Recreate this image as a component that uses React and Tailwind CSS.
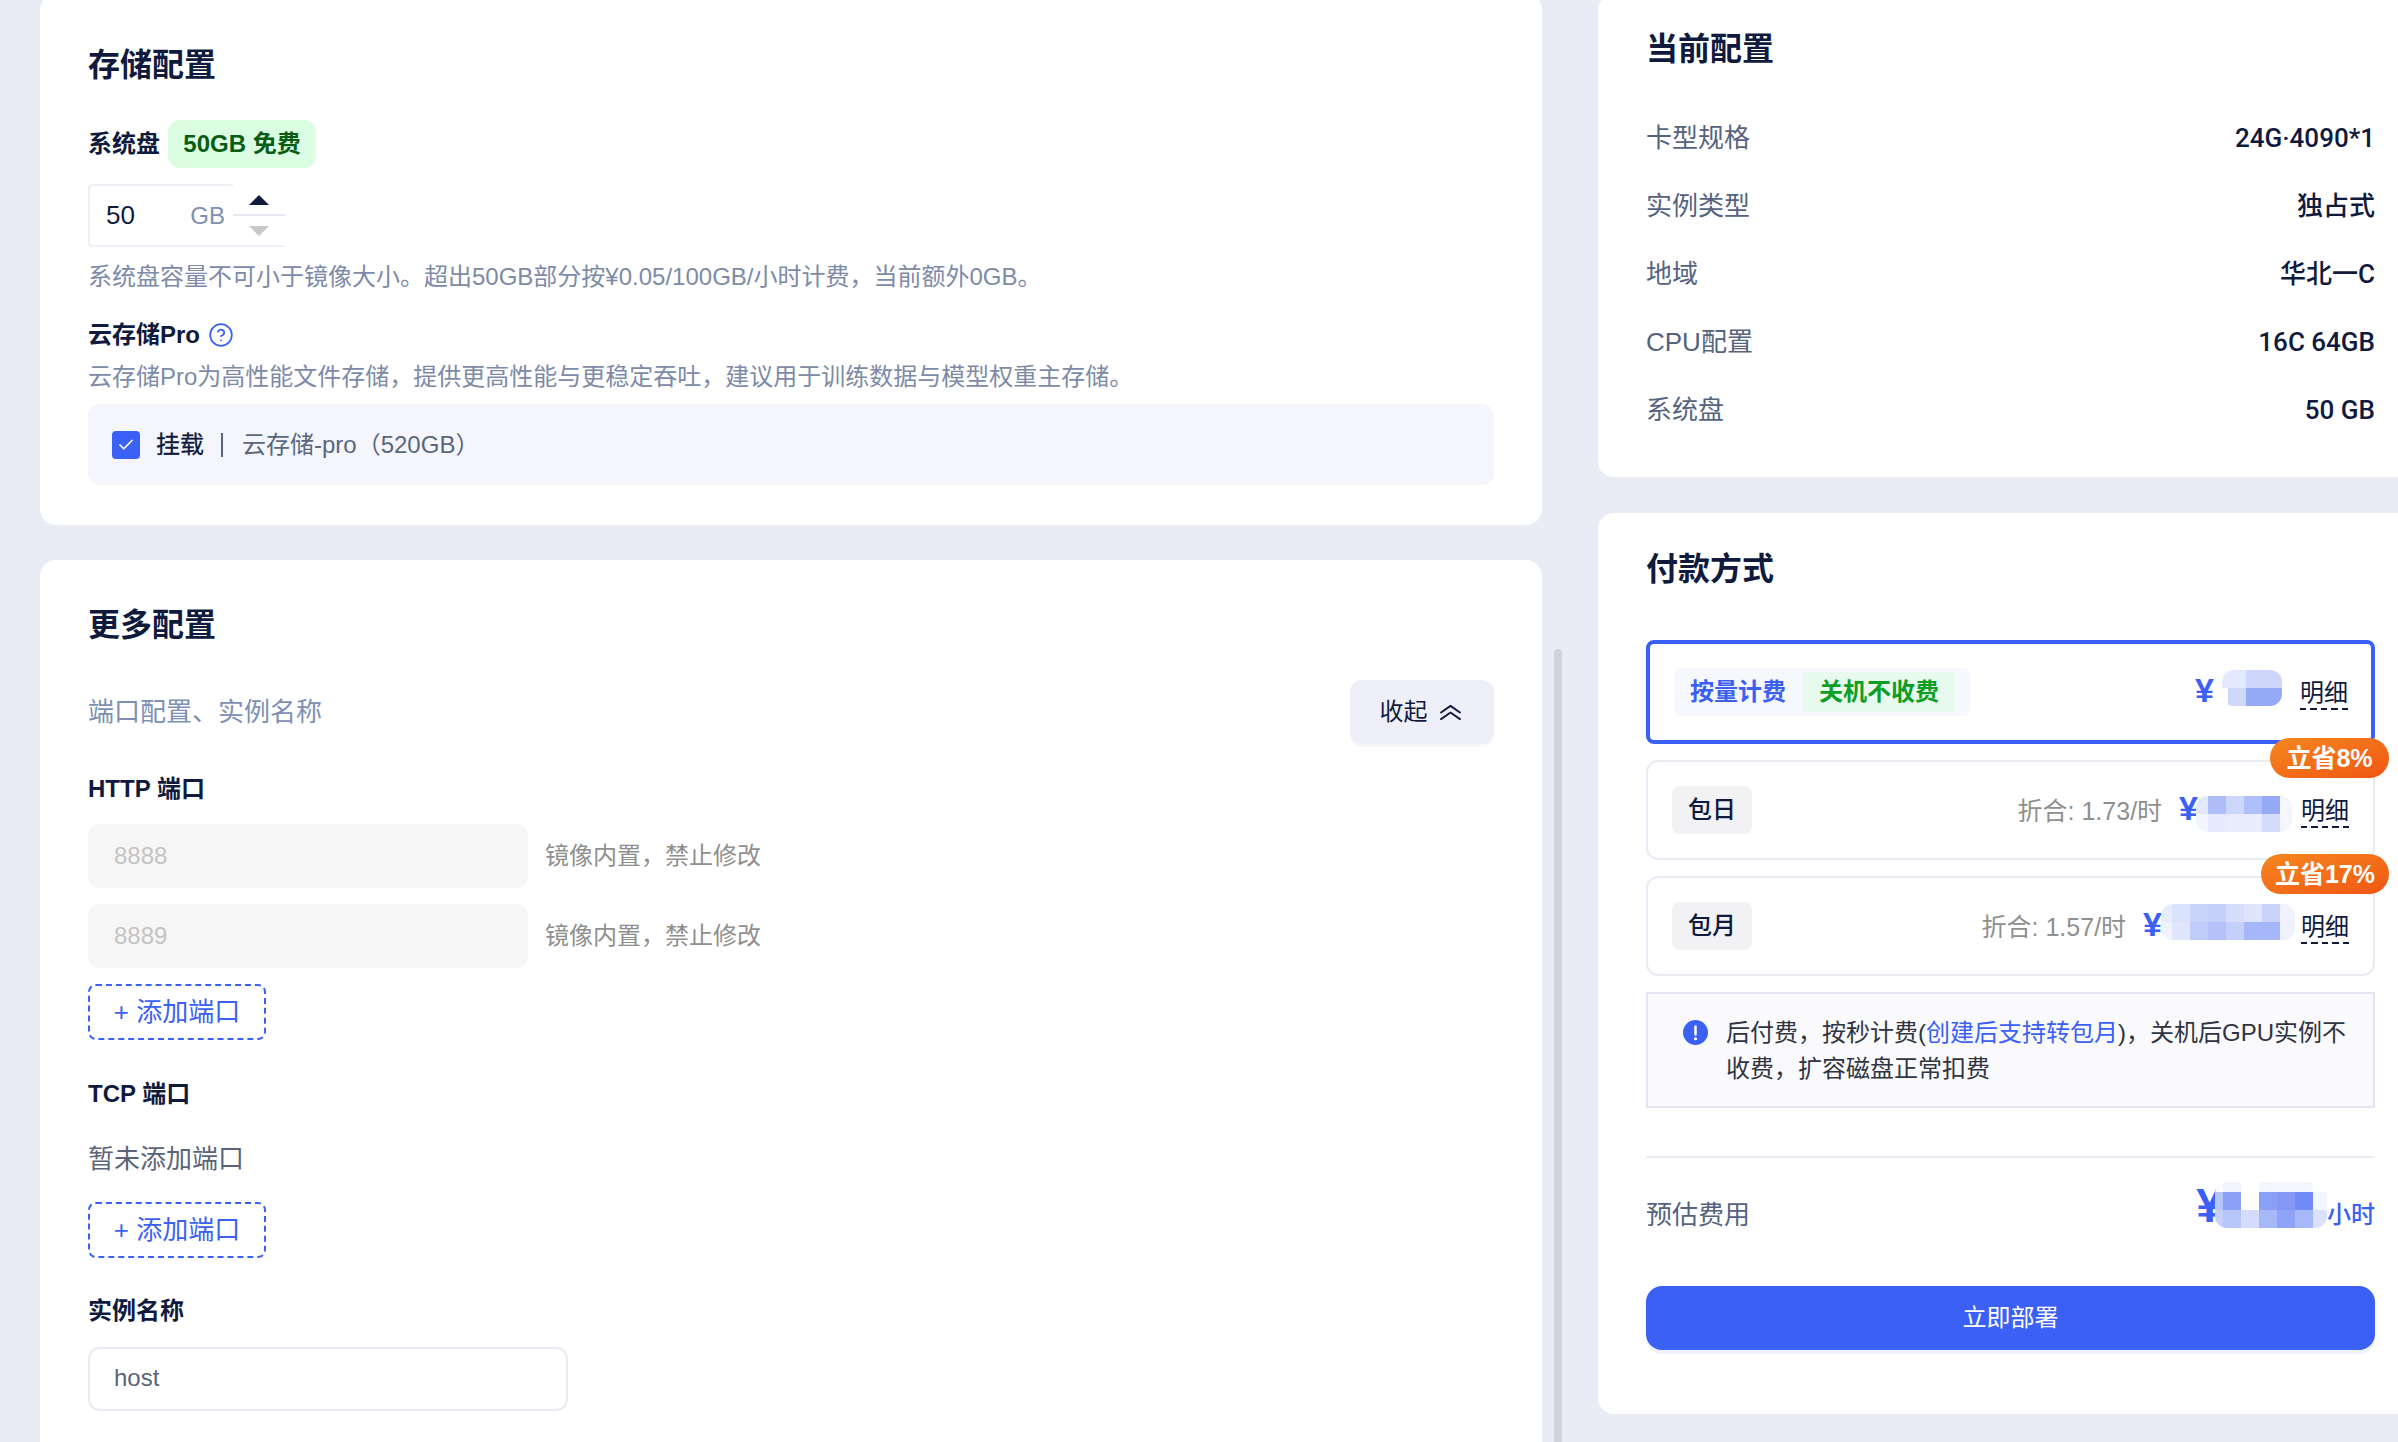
import { CircleHelp, Check } from 'lucide-react'

const configRows = [
  ['卡型规格', '24G·4090*1'],
  ['实例类型', '独占式'],
  ['地域', '华北一C'],
  ['CPU配置', '16C 64GB'],
  ['系统盘', '50 GB'],
]

// blurred prices: each row is a strip of pixel cells
const mosaicHour = {
  box: 'w-[60px] h-[36px]',
  rows: [
    ['h-[18px]', [['w-[24px]', 'bg-[#e3e9fc]'], ['w-[36px]', 'bg-[#cdd6fa]']]],
    ['h-[18px]', [['w-[6px]', 'bg-white'], ['w-[18px]', 'bg-[#cfd8fb]'], ['w-[36px]', 'bg-[#95aaf6]']]],
  ],
}
const mosaicDay = {
  box: 'w-[96px] h-[36px]',
  rows: [
    ['h-[18px]', [['w-[12px]', 'bg-[#e3e9fc]'], ['w-[18px]', 'bg-[#adbdf8]'], ['w-[18px]', 'bg-[#cdd6fb]'], ['w-[18px]', 'bg-[#aebff9]'], ['w-[18px]', 'bg-[#95a9f6]'], ['w-[12px]', 'bg-[#f4f6fe]']]],
    ['h-[18px]', [['w-[12px]', 'bg-[#f2f4fe]'], ['w-[18px]', 'bg-[#e6eafd]'], ['w-[36px]', 'bg-[#e8ecfd]'], ['w-[18px]', 'bg-[#d5dcfb]'], ['w-[12px]', 'bg-[#f4f6fe]']]],
  ],
}
const mosaicMonth = {
  box: 'w-[134px] h-[36px]',
  rows: [
    ['h-[18px]', [['w-[11px]', 'bg-[#e7ecfd]'], ['w-[18px]', 'bg-[#dbe2fc]'], ['w-[18px]', 'bg-[#cad4fb]'], ['w-[18px]', 'bg-[#c4cffa]'], ['w-[18px]', 'bg-[#d7defb]'], ['w-[18px]', 'bg-[#dee4fc]'], ['w-[18px]', 'bg-[#c9d3fa]'], ['w-[15px]', 'bg-[#f0f3fe]']]],
    ['h-[18px]', [['w-[11px]', 'bg-[#f0f3fe]'], ['w-[18px]', 'bg-[#e0e6fc]'], ['w-[18px]', 'bg-[#c0ccfa]'], ['w-[18px]', 'bg-[#b4c2f9]'], ['w-[18px]', 'bg-[#c5d0fa]'], ['w-[36px]', 'bg-[#a5b7f8]'], ['w-[15px]', 'bg-[#eef1fe]']]],
  ],
}
const mosaicTotal = {
  box: 'w-[112px] h-[46px]',
  rows: [
    ['h-[10px]', [['w-[8px]', 'bg-[#fbfbff]'], ['w-[18px]', 'bg-[#f2f4fe]'], ['w-[18px]', 'bg-white'], ['w-[54px]', 'bg-[#f4f6fe]'], ['w-[14px]', 'bg-white']]],
    ['h-[18px]', [['w-[8px]', 'bg-[#b6c5fa]'], ['w-[18px]', 'bg-[#8aa0f6]'], ['w-[18px]', 'bg-white'], ['w-[18px]', 'bg-[#8aa0f6]'], ['w-[18px]', 'bg-[#8399f5]'], ['w-[18px]', 'bg-[#7089f5]'], ['w-[14px]', 'bg-[#f4f6fe]']]],
    ['h-[18px]', [['w-[8px]', 'bg-[#c5d0fb]'], ['w-[18px]', 'bg-[#b7c6f9]'], ['w-[18px]', 'bg-[#d5dcfb]'], ['w-[18px]', 'bg-[#a7b8f8]'], ['w-[18px]', 'bg-[#8fa4f6]'], ['w-[18px]', 'bg-[#a7b8f8]'], ['w-[14px]', 'bg-[#dbe1fc]']]],
  ],
}

function Mosaic({ data, className = '' }) {
  return (
    <div className={`${data.box} ${className} relative flex flex-col rounded-[12px] overflow-hidden shrink-0`}>
      {data.rows.map(([h, cells], i) => (
        <div key={i} className={`flex ${h}`}>
          {cells.map(([w, bg], j) => (
            <div key={j} className={`${w} ${bg}`} />
          ))}
        </div>
      ))}
    </div>
  )
}

function Detail({ className = '' }) {
  return (
    <span className={`${className} h-[36px] leading-[38px] text-[24px] text-[#0f1a3d] bg-[repeating-linear-gradient(90deg,#0f1a3d_0_6px,transparent_6px_10.5px)] bg-[length:100%_2px] bg-bottom bg-no-repeat shrink-0`}>
      明细
    </span>
  )
}

function Yen({ className = '' }) {
  return <span className={`${className} text-[34px] font-bold text-[#3b60f6] leading-[36px]`}>¥</span>
}

function Badge({ children, className = '' }) {
  return (
    <div className={`${className} absolute -top-[24px] -right-[16px] h-[40px] rounded-full bg-gradient-to-br from-[#f5861f] to-[#f05513] text-white text-[25px] font-semibold leading-[40px] text-center`}>
      {children}
    </div>
  )
}

function PlanRow({ name, rate, mosaic, mosaicGap, badge, badgeWidth, detailGap }) {
  return (
    <div className="relative mt-[16px] h-[100px] border-2 border-[#e9ebf5] rounded-[12px] flex items-center pl-[24px] pr-[24px]">
      <span className="w-[80px] h-[48px] rounded-[8px] bg-[#f2f2f4] text-center leading-[48px] text-[24px] font-medium text-[#0f1a3d]">
        {name}
      </span>
      <div className="ml-auto flex items-center">
        <span className="text-[25px] text-[#8f8f8f] mr-[17px] mt-[4px]">{rate}</span>
        <Yen className="mb-[4px]" />
        <Mosaic data={mosaic} className={mosaicGap} />
        <Detail className={detailGap} />
      </div>
      <Badge className={badgeWidth}>{badge}</Badge>
    </div>
  )
}

function PortInput({ value }) {
  return (
    <div className="flex items-center">
      <div className="w-[440px] h-[64px] rounded-[12px] bg-[#f6f6f6] pl-[26px] text-[24px] leading-[64px] text-[#c4c4c4]">{value}</div>
      <span className="ml-[17px] text-[24px] text-[#8f8f8f]">镜像内置，禁止修改</span>
    </div>
  )
}

function AddPort({ className = '' }) {
  return (
    <button className={`${className} block w-[178px] h-[56px] rounded-[8px] border-2 border-dashed border-[#3b60f6] text-[26px] text-[#3b60f6] leading-[50px] text-center`}>
      + 添加端口
    </button>
  )
}

export default function App() {
  return (
    <div className="h-[1442px] w-[2398px] overflow-hidden flex bg-[#e9ecf5] font-['Liberation_Sans','Noto_Sans_CJK_SC',sans-serif] text-[#0f1a3d]">
      {/* left column */}
      <div className="ml-[40px] w-[1502px] -mt-[6px] flex flex-col gap-[35px] shrink-0">
        <div className="bg-white rounded-[16px] pt-[47px] pb-[40px] px-[48px] shrink-0">
          <h2 className="h-[48px] leading-[48px] text-[32px] font-semibold">存储配置</h2>
          <div className="mt-[31px] h-[48px] flex items-center gap-[8px]">
            <span className="text-[24px] font-semibold">系统盘</span>
            <span className="w-[148px] h-[48px] rounded-[12px] bg-[#dbfde1] text-[#0a5c14] text-[24px] font-semibold leading-[48px] text-center">50GB 免费</span>
          </div>

          <div className="mt-[16px] w-[197px] h-[63px] flex">
            <div className="w-[145px] border-2 border-r-0 border-[#eeeff7] rounded-l-[4px] flex items-center pl-[16px]">
              <span className="text-[26px]">50</span>
              <span className="ml-auto mr-[8px] text-[24px] text-[#7d8fb3]">GB</span>
            </div>
            <div className="w-[52px] flex flex-col border-b-2 border-[#eeeff7]">
              <div className="h-[30px] flex items-center justify-center pt-[2px]">
                <div className="w-0 h-0 border-x-[10px] border-x-transparent border-b-[10px] border-b-[#0f1a3d]" />
              </div>
              <div className="h-[2px] bg-[#e6e9f5]" />
              <div className="flex-1 flex items-center justify-center">
                <div className="w-0 h-0 border-x-[10px] border-x-transparent border-t-[10px] border-t-[#c8c8c8]" />
              </div>
            </div>
          </div>

          <p className="mt-[12px] h-[36px] leading-[36px] text-[24px] text-[#7d8aa8]">系统盘容量不可小于镜像大小。超出50GB部分按¥0.05/100GB/小时计费，当前额外0GB。</p>
          <div className="mt-[22px] h-[36px] flex items-center gap-[8px]">
            <span className="text-[24px] font-semibold">云存储Pro</span>
            <CircleHelp size={26} strokeWidth={1.6} className="text-[#3b60f6]" />
          </div>
          <p className="mt-[6px] h-[36px] leading-[36px] text-[24px] text-[#7d8aa8]">云存储Pro为高性能文件存储，提供更高性能与更稳定吞吐，建议用于训练数据与模型权重主存储。</p>

          <div className="mt-[9px] h-[81px] rounded-[12px] bg-[#f5f6fb] flex items-center pl-[24px] text-[24px]">
            <span className="w-[28px] h-[28px] rounded-[4px] bg-[#3b60f6] flex items-center justify-center">
              <Check size={18} strokeWidth={2.2} className="text-white" />
            </span>
            <span className="ml-[16px] [-webkit-text-stroke:0.3px_#0f1a3d]">挂载</span>
            <span className="ml-[17px] w-[2px] h-[24px] bg-[#5a6680]" />
            <span className="ml-[19px] text-[#5a6680]">云存储-pro（520GB）</span>
          </div>
        </div>

        <div className="bg-white rounded-t-[16px] flex-1 pt-[41px] px-[48px]">
          <h2 className="h-[48px] leading-[48px] text-[32px] font-semibold">更多配置</h2>
          <div className="mt-[31px] h-[64px] flex items-center justify-between">
            <span className="text-[26px] text-[#7d8fb3]">端口配置、实例名称</span>
            <button className="w-[144px] h-[64px] rounded-[12px] bg-[#eeeff8] shadow-[0_3px_0_#f6f7fb] flex items-center justify-center gap-[12px] text-[24px] pr-[4px]">
              收起
              <svg width="21" height="17" viewBox="0 0 22 18" fill="none" stroke="#0f1a3d" strokeWidth="2" strokeLinecap="round" strokeLinejoin="round">
                <path d="M1 9 L11 2 L21 9" />
                <path d="M1 16 L11 9 L21 16" />
              </svg>
            </button>
          </div>

          <h3 className="mt-[27px] h-[36px] leading-[36px] text-[24px] font-semibold">HTTP 端口</h3>
          <div className="mt-[17px] flex flex-col gap-[16px]">
            <PortInput value="8888" />
            <PortInput value="8889" />
          </div>
          <AddPort className="mt-[16px]" />

          <h3 className="mt-[36px] h-[36px] leading-[36px] text-[24px] font-semibold">TCP 端口</h3>
          <p className="mt-[29px] h-[36px] leading-[36px] text-[26px] text-[#5a6478]">暂未添加端口</p>
          <AddPort className="mt-[25px]" />

          <h3 className="mt-[35px] h-[36px] leading-[36px] text-[24px] font-semibold">实例名称</h3>
          <div className="mt-[18px] w-[480px] h-[64px] rounded-[12px] border-2 border-[#e9ebf3] pl-[24px] text-[24px] leading-[58px] text-[#5a6478]">host</div>
        </div>
      </div>

      {/* scrollbar */}
      <div className="w-[56px] shrink-0 pl-[12px] pt-[649px]">
        <div className="w-[8px] h-full rounded-t-full bg-[#d1d3dc]" />
      </div>

      {/* right column */}
      <div className="w-[825px] shrink-0 -mt-[6px] flex flex-col gap-[36px]">
        <div className="bg-white rounded-[16px] pt-[31px] pb-[33px] pl-[48px] pr-[48px]">
          <h2 className="h-[48px] leading-[48px] text-[32px] font-semibold">当前配置</h2>
          <div className="mt-[31px]">
            {configRows.map(([label, value]) => (
              <div key={label} className="h-[68px] flex items-center justify-between text-[26px]">
                <span className="text-[#55637f]">{label}</span>
                <span className="font-medium font-['Roboto','Noto_Sans_CJK_SC',sans-serif]">{value}</span>
              </div>
            ))}
          </div>
        </div>

        <div className="bg-white rounded-[16px] pt-[32px] pb-[64px] pl-[48px] pr-[48px]">
          <h2 className="h-[48px] leading-[48px] text-[32px] font-semibold">付款方式</h2>

          <div className="mt-[47px] h-[104px] border-[4px] border-[#3b60f6] rounded-[8px] flex items-center pl-[24px] pr-[23px]">
            <div className="h-[48px] rounded-[8px] bg-[#f7f8fe] flex items-center pl-[16px] pr-[16px]">
              <span className="text-[24px] font-semibold text-[#3b60f6]">按量计费</span>
              <span className="ml-[17px] h-[40px] px-[16px] bg-[#e8faee] text-[24px] font-semibold text-[#0d9e25] leading-[40px]">关机不收费</span>
            </div>
            <div className="ml-auto flex items-center">
              <Yen className="mb-[4px]" />
              <Mosaic data={mosaicHour} className="ml-[8px] mb-[8px]" />
              <Detail className="ml-[18px]" />
            </div>
          </div>

          <PlanRow name="包日" rate="折合: 1.73/时" mosaic={mosaicDay} mosaicGap="-ml-[2px] mt-[8px]" badge="立省8%" badgeWidth="w-[119px]" detailGap="ml-[9px]" />
          <PlanRow name="包月" rate="折合: 1.57/时" mosaic={mosaicMonth} mosaicGap="-ml-[1px] mb-[8px]" badge="立省17%" badgeWidth="w-[128px]" detailGap="ml-[6px]" />

          <div className="mt-[16px] h-[116px] border-2 border-[#e3e5f5] bg-[#fafafd] flex pl-[35px] pr-[18px] pt-[21px] text-[24px] leading-[36px] text-[#2f3442]">
            <svg width="25" height="25" viewBox="0 0 24 24" className="shrink-0 mt-[5px]">
              <circle cx="12" cy="12" r="12" fill="#3b60f6" />
              <rect x="10.8" y="5" width="2.4" height="10" rx="1.2" fill="#fff" />
              <circle cx="12" cy="18" r="1.5" fill="#fff" />
            </svg>
            <p className="ml-[18px]">
              后付费，按秒计费(<span className="text-[#3b60f6]">创建后支持转包月</span>)，关机后GPU实例不收费，扩容磁盘正常扣费
            </p>
          </div>

          <div className="mt-[48px] h-[2px] bg-[#e9ebf5]" />

          <div className="mt-[22px] h-[70px] flex items-center">
            <span className="text-[26px] text-[#55637f]">预估费用</span>
            <div className="ml-auto flex items-center">
              <span className="text-[48px] font-bold text-[#3b60f6] leading-[46px] mb-[18px]">¥</span>
              <Mosaic data={mosaicTotal} className="-ml-[8px] mb-[20px]" />
              <span className="text-[24px] text-[#3b60f6] font-medium">小时</span>
            </div>
          </div>

          <button className="mt-[36px] w-full h-[64px] rounded-[16px] bg-[#3b60f6] shadow-[0_4px_0_#eef1fe] text-white text-[24px]">立即部署</button>
        </div>
      </div>
    </div>
  )
}
